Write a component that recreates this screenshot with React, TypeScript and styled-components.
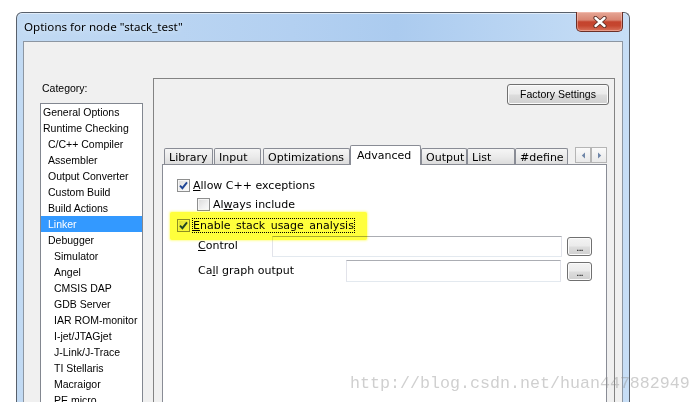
import React from 'react'
import styled, { createGlobalStyle } from 'styled-components'

const categories = [
	{ name: 'General Options', level: 0 },
	{ name: 'Runtime Checking', level: 0 },
	{ name: 'C/C++ Compiler', level: 1 },
	{ name: 'Assembler', level: 1 },
	{ name: 'Output Converter', level: 1 },
	{ name: 'Custom Build', level: 1 },
	{ name: 'Build Actions', level: 1 },
	{ name: 'Linker', level: 1 },
	{ name: 'Debugger', level: 1 },
	{ name: 'Simulator', level: 2 },
	{ name: 'Angel', level: 2 },
	{ name: 'CMSIS DAP', level: 2 },
	{ name: 'GDB Server', level: 2 },
	{ name: 'IAR ROM-monitor', level: 2 },
	{ name: 'I-jet/JTAGjet', level: 2 },
	{ name: 'J-Link/J-Trace', level: 2 },
	{ name: 'TI Stellaris', level: 2 },
	{ name: 'Macraigor', level: 2 },
	{ name: 'PE micro', level: 2 },
]

// tab widths / offsets measured off the dialog
const tabs = [
	{ label: 'Library', w: 49, ml: 0 },
	{ label: 'Input', w: 47, ml: 1 },
	{ label: 'Optimizations', w: 87, ml: 2 },
	{ label: 'Advanced', w: 71, ml: 0, active: true },
	{ label: 'Output', w: 46, ml: 0 },
	{ label: 'List', w: 48, ml: 0 },
	{ label: '#define', w: 53, ml: 0 },
]

const indents = [2, 7, 13]

function CheckBox({ checked }: { checked?: boolean }) {
	return (
		<Box>
			{checked && (
				<svg width='9' height='9' viewBox='0 0 9 9'>
					<path d='M1 4.6 L3.4 7.2 L8 1.4' fill='none' stroke='#1f4595' strokeWidth='1.9' />
				</svg>
			)}
		</Box>
	)
}

function App() {
	return (
		<Page>
			<GlobalStyle />
			<Window>
				<TitleBar>
					<Title>Options for node &quot;stack_test&quot;</Title>
					<CloseButton>
						<svg width='14' height='12' viewBox='0 0 14 12'>
							<path d='M2.5 2 L11.5 10 M11.5 2 L2.5 10' stroke='#5b3028' strokeWidth='4.2' strokeLinecap='round' />
							<path d='M2.5 2 L11.5 10 M11.5 2 L2.5 10' stroke='#fff' strokeWidth='2.4' strokeLinecap='round' />
						</svg>
					</CloseButton>
				</TitleBar>
				<Client>
					<LeftColumn>
						<CategoryLabel>Category:</CategoryLabel>
						<ListBox>
							{categories.map((item, index) => (
								<ListItem key={index} $level={item.level} $selected={item.name === 'Linker'}>
									{item.name}
								</ListItem>
							))}
						</ListBox>
					</LeftColumn>
					<Panel>
						<PushButton>Factory Settings</PushButton>
						<TabControl>
							<TabStrip>
								{tabs.map((t) => (
									<Tab key={t.label} $w={t.w} $ml={t.ml} $active={!!t.active}>
										{t.label}
									</Tab>
								))}
								<Arrows>
									<ArrowButton>
										<svg width='5' height='7' viewBox='0 0 5 7'>
											<path d='M4 0.5 L0.8 3.5 L4 6.5 Z' fill='#6f86a8' />
										</svg>
									</ArrowButton>
									<ArrowButton>
										<svg width='5' height='7' viewBox='0 0 5 7'>
											<path d='M1 0.5 L4.2 3.5 L1 6.5 Z' fill='#6f86a8' />
										</svg>
									</ArrowButton>
								</Arrows>
							</TabStrip>
							<TabPage>
								<CheckRow>
									<CheckBox checked />
									<CheckText>
										<u>A</u>llow C++ exceptions
									</CheckText>
								</CheckRow>
								<CheckRow $indent={20} $top={6}>
									<CheckBox />
									<CheckText>
										Al<u>w</u>ays include
									</CheckText>
								</CheckRow>
								<CheckRow $top={8}>
									<CheckBox checked />
									<CheckText $focus>
										<u>E</u>nable stack usage analysis
									</CheckText>
									<Highlight />
								</CheckRow>
								<FieldRow $top={4}>
									<FieldLabel>
										<u>C</u>ontrol
									</FieldLabel>
									<TextField $w={290} $h={21} />
									<BrowseButton $ml={5}>...</BrowseButton>
								</FieldRow>
								<FieldRow $top={3}>
									<FieldLabel>
										Ca<u>l</u>l graph output
									</FieldLabel>
									<TextField $w={215} $h={22} />
									<BrowseButton $ml={6}>...</BrowseButton>
								</FieldRow>
							</TabPage>
						</TabControl>
					</Panel>
				</Client>
			</Window>
			<Watermark>http://blog.csdn.net/huan447882949</Watermark>
		</Page>
	)
}

const GlobalStyle = createGlobalStyle`
	html, body {
		margin: 0;
		padding: 0;
		background: #fff;
	}
	body {
		width: 700px;
		height: 402px;
		overflow: hidden;
	}
`

const Page = styled.div`
	position: relative;
	box-sizing: border-box;
	width: 700px;
	height: 402px;
	overflow: hidden;
	padding: 12px 0 0 16px;
	background: #fff;
`

const Window = styled.div`
	box-sizing: border-box;
	width: 614px;
	height: 430px;
	display: flex;
	flex-direction: column;
	border: 1px solid #58606b;
	border-bottom: none;
	border-radius: 6px 6px 0 0;
	background: linear-gradient(90deg, #c2daf3 0%, #b3d0f1 45%, #abcbef 62%, #c7def6 100%);
	box-shadow: inset 0 1px 0 #e0ecf9;
`

const TitleBar = styled.div`
	height: 28px;
	display: flex;
	justify-content: space-between;
	align-items: flex-start;
	padding: 0 6px 0 7px;
`

const Title = styled.div`
	font-family: 'Noto Sans', 'Open Sans', sans-serif;
	font-size: 11.6px;
	line-height: 27px;
	color: #000;
	text-shadow: 0 0 6px #e8f2fc;
`

const CloseButton = styled.div`
	box-sizing: border-box;
	width: 47px;
	height: 20px;
	margin-top: -1px;
	display: flex;
	align-items: center;
	justify-content: center;
	border: 1px solid #6b2f27;
	border-top: none;
	border-radius: 0 0 5px 5px;
	background: linear-gradient(180deg, #e6a797 0%, #d98673 42%, #c4432d 52%, #c5462f 72%, #d8735c 100%);
	box-shadow: inset 0 0 0 1px rgba(255, 210, 200, 0.45);
`

const Client = styled.div`
	flex: 1;
	margin: 0 6px;
	display: flex;
	gap: 10px;
	padding: 36px 7px 0 16px;
	border: 1px solid #8c96a2;
	border-bottom: none;
	background: #f0f0f0;
`

const LeftColumn = styled.div`
	width: 104px;
	display: flex;
	flex-direction: column;
`

const CategoryLabel = styled.div`
	font-family: 'Liberation Sans', Arial, sans-serif;
	font-size: 10.5px;
	line-height: 14px;
	margin: 3px 0 8px 2px;
	color: #000;
`

const ListBox = styled.div`
	flex: 1;
	border: 1px solid #828790;
	background: #fff;
`

const ListItem = styled.div<{ $level: number; $selected: boolean }>`
	height: 16px;
	line-height: 16px;
	padding-left: ${(p) => indents[p.$level]}px;
	font-family: 'Liberation Sans', Arial, sans-serif;
	font-size: 10.5px;
	white-space: nowrap;
	color: ${(p) => (p.$selected ? '#fff' : '#000')};
	background: ${(p) => (p.$selected ? '#3399ff' : 'transparent')};
`

const Panel = styled.div`
	flex: 1;
	display: flex;
	flex-direction: column;
	padding: 5px 5px 0 8px;
	border: 1px solid #838383;
	border-bottom: none;
`

const PushButton = styled.div`
	align-self: flex-end;
	box-sizing: border-box;
	width: 102px;
	height: 21px;
	line-height: 19px;
	text-align: center;
	font-family: 'Liberation Sans', Arial, sans-serif;
	font-size: 10.5px;
	color: #000;
	border: 1px solid #707070;
	border-radius: 3px;
	background: linear-gradient(180deg, #f3f3f3 0%, #ebebeb 48%, #dddddd 52%, #cfcfcf 100%);
	box-shadow: inset 0 0 0 1px #fbfbfb;
`

const TabControl = styled.div`
	flex: 1;
	display: flex;
	flex-direction: column;
	margin: 40px 2px 0 0;
`

const TabStrip = styled.div`
	position: relative;
	z-index: 1;
	height: 20px;
	margin-bottom: -1px;
	display: flex;
	align-items: flex-end;
	padding-left: 2px;
`

const Tab = styled.div<{ $w: number; $ml: number; $active: boolean }>`
	box-sizing: border-box;
	width: ${(p) => p.$w}px;
	height: ${(p) => (p.$active ? 20 : 16)}px;
	margin-left: ${(p) => p.$ml}px;
	margin-bottom: ${(p) => (p.$active ? 0 : 1)}px;
	padding: ${(p) => (p.$active ? '2px 0 0 6px' : '1px 0 0 4px')};
	font-family: 'DejaVu Sans', Verdana, sans-serif;
	font-size: 11px;
	line-height: 15px;
	color: #000;
	white-space: nowrap;
	overflow: hidden;
	border: 1px solid #898c95;
	border-bottom: none;
	border-radius: 2px 2px 0 0;
	background: ${(p) => (p.$active ? '#fff' : 'linear-gradient(180deg, #f5f5f5 0%, #ebebeb 50%, #dcdcdc 100%)')};
`

const Arrows = styled.div`
	display: flex;
	margin: 0 0 2px 7px;
`

const ArrowButton = styled.div`
	box-sizing: border-box;
	width: 16px;
	height: 16px;
	display: flex;
	align-items: center;
	justify-content: center;
	border: 1px solid #b5b5b5;
	background: linear-gradient(180deg, #fafafa 0%, #e9e9e9 100%);
`

const TabPage = styled.div`
	flex: 1;
	display: flex;
	flex-direction: column;
	align-items: flex-start;
	padding: 14px 13px 0 14px;
	border: 1px solid #898c95;
	border-bottom: none;
	background: #fff;
`

const CheckRow = styled.div<{ $indent?: number; $top?: number }>`
	position: relative;
	height: 13px;
	display: flex;
	align-items: center;
	gap: 3px;
	margin-left: ${(p) => p.$indent || 0}px;
	margin-top: ${(p) => p.$top || 0}px;
`

const Box = styled.div`
	box-sizing: border-box;
	width: 13px;
	height: 13px;
	display: flex;
	align-items: center;
	justify-content: center;
	border: 1px solid #8e8f8f;
	background: linear-gradient(135deg, #dadada 0%, #f0f0f0 60%, #fbfbfb 100%);
	box-shadow: inset 0 0 0 1px #f6f6f6;
`

const CheckText = styled.span<{ $focus?: boolean }>`
	font-family: 'DejaVu Sans', Verdana, sans-serif;
	font-size: 11px;
	line-height: 13px;
	color: #000;
	white-space: nowrap;
	word-spacing: ${(p) => (p.$focus ? 2 : 0)}px;
	outline: ${(p) => (p.$focus ? '1px dotted #000' : 'none')};
	outline-offset: 0;
`

const Highlight = styled.div`
	position: absolute;
	left: -7px;
	top: -7px;
	width: 197px;
	height: 28px;
	background: #ffff3c;
	mix-blend-mode: multiply;
	border-radius: 2px;
	box-shadow: 0 0 2px 1px rgba(255, 255, 90, 0.6);
	pointer-events: none;
`

const FieldRow = styled.div<{ $top: number }>`
	width: 415px;
	display: flex;
	align-items: center;
	margin-top: ${(p) => p.$top}px;
`

const FieldLabel = styled.div`
	flex: 1;
	padding-left: 21px;
	margin-top: -2px;
	font-family: 'DejaVu Sans', Verdana, sans-serif;
	font-size: 11px;
	color: #000;
	white-space: nowrap;
`

const TextField = styled.div<{ $w: number; $h: number }>`
	box-sizing: border-box;
	width: ${(p) => p.$w}px;
	height: ${(p) => p.$h}px;
	background: #fff;
	border: 1px solid #e2e3ea;
	border-top-color: #abadb3;
	border-bottom-color: #e3e9ef;
`

const BrowseButton = styled.div<{ $ml: number }>`
	box-sizing: border-box;
	width: 25px;
	height: 19px;
	margin-left: ${(p) => p.$ml}px;
	text-align: center;
	font-family: 'DejaVu Sans', Verdana, sans-serif;
	font-size: 10px;
	line-height: 19px;
	letter-spacing: -1px;
	color: #000;
	border: 1px solid #707070;
	border-radius: 3px;
	background: linear-gradient(180deg, #f3f3f3 0%, #ebebeb 48%, #dddddd 52%, #cfcfcf 100%);
	box-shadow: inset 0 0 0 1px #fbfbfb;
`

const Watermark = styled.div`
	position: absolute;
	left: 350px;
	top: 374px;
	font-family: 'Liberation Mono', 'Courier New', monospace;
	font-size: 16.67px;
	line-height: 20px;
	color: rgba(140, 140, 140, 0.42);
	white-space: nowrap;
	pointer-events: none;
`

export default App
